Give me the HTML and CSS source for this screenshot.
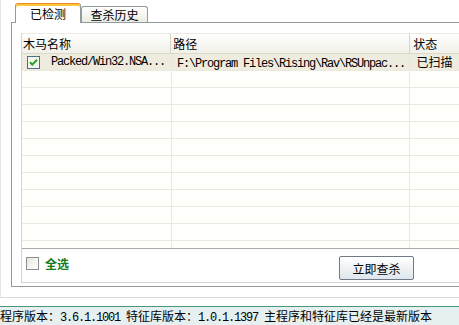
FILE: index.html
```html
<!DOCTYPE html>
<html lang="zh-CN">
<head>
    <meta charset="UTF-8">
    <title>查杀</title>
    <link rel="stylesheet" href="styles.css">
</head>
<body>
    <div class="window">
        <div class="tabs">
            <div class="tab active">已检测</div>
            <div class="tab">查杀历史</div>
        </div>

        <div class="panel">
            <div class="frame">
                <div class="list">
                    <div class="list-head">
                        <div class="col c1">木马名称</div>
                        <div class="col c2">路径</div>
                        <div class="col c3">状态</div>
                    </div>
                    <div class="list-body" id="rows"></div>
                </div>

                <div class="actions">
                    <div class="select-all">
                        <span class="box"></span>
                        <span class="select-label">全选</span>
                    </div>
                    <button class="btn">立即查杀</button>
                </div>
            </div>
        </div>
    </div>

    <div class="status">程序版本：<span class="en">3.6.1.1001 </span>特征库版本：<span class="en">1.0.1.1397 </span>主程序和特征库已经是最新版本</div>

    <script>
        // 已检测的木马列表
        const found = [
            { name: 'Packed/Win32.NSA...', path: 'F:\\Program Files\\Rising\\Rav\\RSUnpac...', state: '已扫描' }
        ];

        const check = '<svg class="check" width="13" height="13" viewBox="0 0 13 13">' +
            '<rect x="0.5" y="0.5" width="12" height="12" fill="#f4f4ee" stroke="#4f6f88"/>' +
            '<path d="M3 6.2 L5.3 8.6 L10 3.8" fill="none" stroke="#21a121" stroke-width="2"/></svg>';

        const body = document.getElementById('rows');
        for (let i = 0; i < 12; i++) {
            const item = found[i];
            const row = document.createElement('div');
            row.className = item ? 'row picked' : 'row';
            row.innerHTML = item
                ? `<div class="col c1">${check}<span class="en">${item.name}</span></div>` +
                  `<div class="col c2"><span class="en">${item.path}</span></div>` +
                  `<div class="col c3">${item.state}</div>`
                : '<div class="col c1"></div><div class="col c2"></div><div class="col c3"></div>';
            body.appendChild(row);
        }
    </script>
</body>
</html>
```

FILE: styles.css
```css
* {
    margin: 0;
    padding: 0;
    box-sizing: border-box;
}

body {
    width: 459px;
    height: 325px;
    overflow: hidden;
    background-color: #fff;
    font-family: "Noto Sans CJK SC", sans-serif;
    font-size: 12px;
    color: #000;
}

.en {
    font-family: "Liberation Mono", monospace;
    font-size: 12px;
    letter-spacing: -1.2px;
    white-space: pre;
}

.window {
    height: 298px;
    border-left: 1px solid #e6e6e6;
    border-bottom: 1px solid #d9d9d9;
    padding-left: 10px;
    overflow: hidden;
}

.tabs {
    display: flex;
    align-items: flex-end;
    height: 22px;
    padding-left: 4px;
}

.tab {
    position: relative;
    width: 67px;
    height: 16px;
    line-height: 15px;
    text-align: center;
    border: 1px solid #919b9c;
    border-bottom: none;
    border-radius: 3px 3px 0 0;
    background: linear-gradient(#ffffff, #ecebe4);
}

.tab.active {
    width: 66px;
    height: 20px;
    line-height: 19px;
    margin-bottom: -1px;
    z-index: 1;
    background: #fff;
    border-top: 1px solid #e68b2c;
    box-shadow: inset 0 2px 0 #ffc73c;
}

.panel {
    width: 480px;
    height: 265px;
    border: 1px solid #919b9c;
    padding: 10px 0 3px 9px;
}

.frame {
    height: 250px;
    border-left: 1px solid #d4d4d4;
    border-bottom: 1px solid #d4d4d4;
}

.list {
    height: 216px;
    border-bottom: 1px solid #a9a9a9;
    background-color: #fffffb;
    overflow: hidden;
}

.list-head {
    display: flex;
    height: 21px;
    line-height: 19px;
    background: linear-gradient(#ffffff, #f1f0e9);
    border-top: 1px solid #ecebe4;
    border-bottom: 1px solid #dcd9c9;
}

.list-head .col {
    padding-left: 1px;
    border-right: 1px solid #d7d4c4;
}

.list-head .c1 {
    width: 150px;
}

.list-head .c2 {
    width: 240px;
    padding-left: 2px;
}

.list-head .c3 {
    padding-left: 3px;
}

.row {
    display: flex;
    height: 17px;
    line-height: 16px;
    border-bottom: 1px solid #ebe9de;
}

.row.picked {
    background-color: #eeecdf;
}

.row .col {
    border-right: 1px solid #ebe9de;
}

.c1 {
    width: 151px;
    display: flex;
    align-items: center;
    padding-left: 5px;
}

.c2 {
    width: 240px;
    padding-left: 5px;
}

.c3 {
    width: 80px;
    padding-left: 6px;
}

.check {
    margin-right: 11px;
    flex-shrink: 0;
}

.actions {
    display: flex;
    height: 33px;
}

.select-all {
    width: 317px;
    display: flex;
    align-items: center;
    height: 28px;
    padding-left: 4px;
}

.box {
    width: 13px;
    height: 13px;
    border: 1px solid #8c8c8c;
    background: linear-gradient(135deg, #e8e8e0, #ffffff);
    margin-right: 6px;
}

.select-label {
    color: #167a16;
    font-weight: bold;
}

.btn {
    margin-top: 7px;
    width: 75px;
    height: 24px;
    font-family: "Noto Sans CJK SC", sans-serif;
    font-size: 12px;
    border: 1px solid #6f7b86;
    border-radius: 2px;
    background: linear-gradient(#ffffff, #dfe6ec);
    color: #000;
}

.status {
    margin-top: 8px;
    height: 19px;
    line-height: 17px;
    border-top: 1px solid #4a9878;
    background-color: #e6f0f1;
    white-space: nowrap;
}
```
